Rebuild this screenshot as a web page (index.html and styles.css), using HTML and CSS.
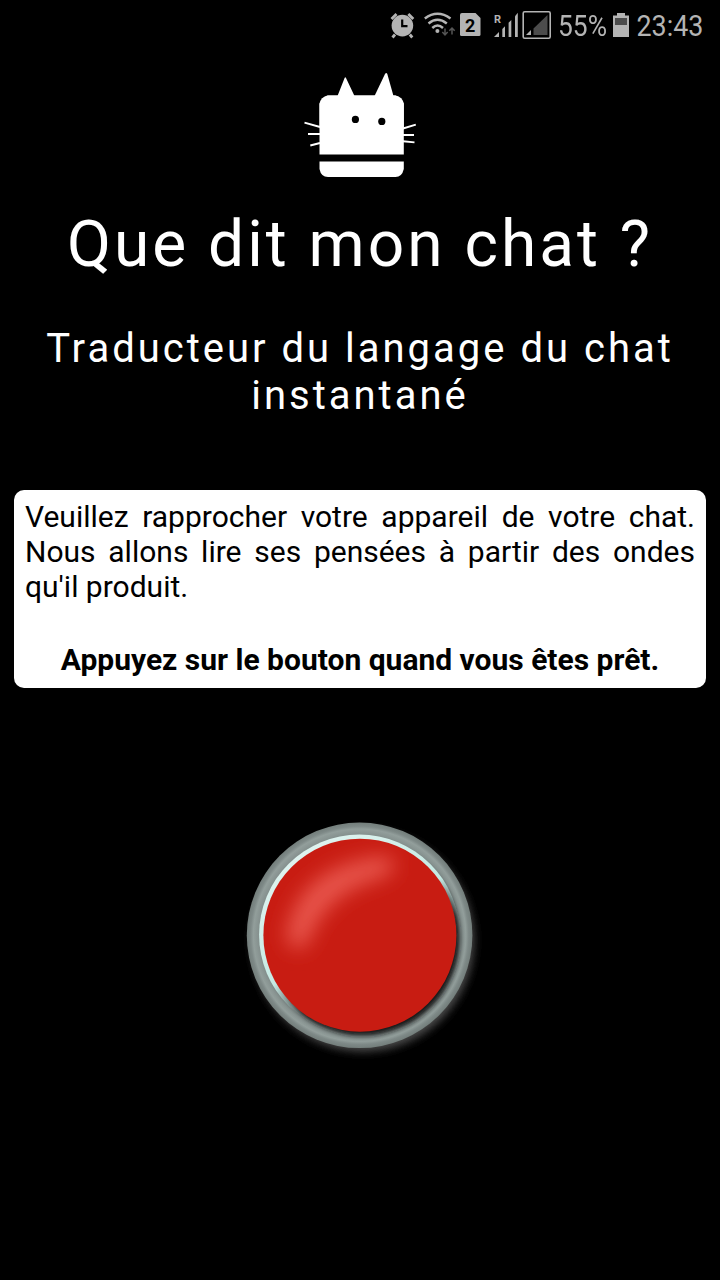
FILE: index.html
```
<!DOCTYPE html>
<html lang="fr">
  <head>
    <meta charset="utf-8">
    <title>Que dit mon chat ?</title>
    <link rel="stylesheet" href="styles.css">
  </head>
  <body>
    <div class="status-bar">
      <!-- alarm -->
      <svg width="34" height="50" viewBox="390 0 34 50">
        <circle cx="402.4" cy="25.6" r="10.8" fill="#b4b4b4"/>
        <path d="M391.5 19L396.5 14M413.3 19L408.3 14M395 34.5L392.5 37.5M409.8 34.5L412.3 37.5" stroke="#b4b4b4" stroke-width="2.8"/>
        <path d="M402.2 19.5V26.2H407.5" fill="none" stroke="#000" stroke-width="2.2"/>
      </svg>
      <!-- wifi -->
      <svg width="36" height="50" viewBox="424 0 36 50">
        <g fill="none" stroke="#b4b4b4" stroke-width="2.5">
          <path d="M424.8 18.5Q437.5 9 450.5 18.5"/>
          <path d="M428.5 23.5Q437.5 16 446.8 23.5"/>
          <path d="M432.3 28Q437.5 23 443 28"/>
        </g>
        <circle cx="437.4" cy="31" r="2" fill="#b4b4b4"/>
        <path d="M445 28.5V35M442.3 32L445 34.8L447.7 32M452 34.5V28M449.3 30.8L452 28L454.7 30.8" fill="none" stroke="#555" stroke-width="1.5"/>
      </svg>
      <!-- sim 2 -->
      <svg width="33" height="50" viewBox="460 0 33 50">
        <path d="M462 13H475.5L480.5 18V34.5Q480.5 36 479 36H461.5Q460 36 460 34.5V15Q460 13 462 13Z" fill="#b4b4b4"/>
        <text x="470.2" y="32.3" class="sim-number">2</text>
      </svg>
      <!-- signal, roaming -->
      <svg width="28" height="50" viewBox="493 0 28 50">
        <text x="494" y="23.2" class="roaming">R</text>
        <g fill="#b4b4b4">
          <path d="M494 37L499 32V37Z"/>
          <path d="M502.3 29L505 26.3V37H502.3Z"/>
          <path d="M508.6 22.7L511.3 20V37H508.6Z"/>
          <path d="M515 16.2L517.8 12.8V37H515Z"/>
        </g>
      </svg>
      <!-- second signal -->
      <svg width="37" height="50" viewBox="521 0 37 50">
        <rect x="523.2" y="11.8" width="27" height="26.4" rx="1.5" fill="none" stroke="#b4b4b4" stroke-width="1.6"/>
        <path d="M533.5 35V28.5L547.5 15V35Z" fill="#4c4c4c"/>
        <path d="M526 35L531 30V35Z" fill="#b4b4b4"/>
      </svg>
      <span class="status-text percent">55%</span>
      <!-- battery -->
      <svg width="24" height="50" viewBox="612 0 24 50">
        <path d="M613 15.5H617V13H625V15.5H629V37H613Z" fill="#b4b4b4"/>
        <rect x="615" y="18" width="12" height="7" fill="#4c4c4c"/>
      </svg>
      <span class="status-text clock">23:43</span>
    </div>

    <div class="header">
      <svg class="cat" width="120" height="120" viewBox="300 65 120 120">
        <g fill="#fff">
          <path d="M337.5 96L344.6 78Q345.3 76.5 346 78L354.5 96Z"/>
          <path d="M374.5 96L385 74Q386.3 72 387.3 74L393.5 96Z"/>
          <path d="M327 95.5H396L403.8 103V154.5H319.5V103Z"/>
          <rect x="319.5" y="95.5" width="84.3" height="40" rx="9"/>
          <path d="M319.5 161.5H403.8V169Q402 177 395.5 177H328Q321 177 319.5 169Z"/>
        </g>
        <circle cx="355.4" cy="119.4" r="3.6"/>
        <circle cx="381.8" cy="121.4" r="3.6"/>
        <path d="M304.5 122.7L320 127M308 134H320M310.3 145.5L320 143M403 128.5L415.8 124.7M403 135H414M403 141.3L414.5 142.4" stroke="#fff" stroke-width="1.9"/>
      </svg>
      <h1>Que dit mon chat ?</h1>
      <h2>Traducteur du langage du chat instantané</h2>
    </div>

    <div class="instructions">
      <p>Veuillez rapprocher votre appareil de votre chat. Nous allons lire ses pensées à partir des ondes qu'il produit.</p>
      <p class="ready">Appuyez sur le bouton quand vous êtes prêt.</p>
    </div>

    <button class="push-button" type="button" aria-label="Lire les pensées">
      <svg width="260" height="260" viewBox="230 805 260 260">
        <defs>
          <filter id="glow" x="-20%" y="-20%" width="140%" height="140%"><feGaussianBlur stdDeviation="4"/></filter>
          <filter id="soft" x="-20%" y="-20%" width="140%" height="140%"><feGaussianBlur stdDeviation="2.5"/></filter>
          <filter id="shine" x="-100%" y="-100%" width="300%" height="300%"><feGaussianBlur stdDeviation="10"/></filter>
          <radialGradient id="rim" gradientUnits="userSpaceOnUse" cx="359.6" cy="935.3" r="113">
            <stop offset=".87" stop-color="#7f8a88"/>
            <stop offset=".94" stop-color="#929e9b"/>
            <stop offset=".965" stop-color="#7e8987"/>
            <stop offset="1" stop-color="#727d7a"/>
          </radialGradient>
          <linearGradient id="edge" gradientUnits="userSpaceOnUse" x1="305" y1="851" x2="413" y2="1019">
            <stop offset="0" stop-color="#def3ef"/>
            <stop offset=".48" stop-color="#c5e9e3"/>
            <stop offset=".68" stop-color="#9ebbb8" stop-opacity="0"/>
          </linearGradient>
          <clipPath id="rim-clip"><circle cx="359.6" cy="935.3" r="112.5"/></clipPath>
          <clipPath id="red-clip"><circle cx="359.9" cy="935.2" r="96.5"/></clipPath>
        </defs>
        <circle cx="363" cy="940.5" r="111" fill="#4c4c4c" filter="url(#glow)"/>
        <circle cx="359.6" cy="935.3" r="112.8" fill="url(#rim)"/>
        <g clip-path="url(#rim-clip)">
          <circle cx="362.5" cy="938.5" r="97" fill="#151719" filter="url(#soft)"/>
        </g>
        <circle cx="359.4" cy="934.8" r="100.3" fill="url(#edge)"/>
        <circle cx="359.9" cy="935.2" r="96.5" fill="#c81c12"/>
        <g clip-path="url(#red-clip)">
          <path d="M286 938Q296 866 384 856Q404 862 386 876Q352 886 334 902Q316 918 308 942Q296 958 286 938Z" fill="#ea5a50" fill-opacity=".95" filter="url(#shine)"/>
        </g>
      </svg>
    </button>
  </body>
</html>
```
FILE: styles.css
```
* {
  box-sizing: border-box;
}

body {
  margin: 0;
  min-height: 1280px;
  display: flex;
  flex-direction: column;
  align-items: center;
  background-color: #000;
  color: #fff;
  font-family: Roboto, sans-serif;
}

svg {
  display: block;
  flex: none;
}

.status-bar {
  width: 100%;
  height: 50px;
  padding-right: 16px;
  display: flex;
  justify-content: flex-end;
}

.status-text {
  color: #b4b4b4;
  font-size: 30px;
  line-height: 51px;
  white-space: nowrap;
  transform-origin: left;
}

.percent {
  width: 54px;
  transform: scaleX(.88);
}

.clock {
  width: 68px;
  transform: translateX(.5px) scaleX(.895);
}

.sim-number {
  font-size: 18px;
  font-weight: bold;
  text-anchor: middle;
}

.roaming {
  font-size: 11px;
  font-weight: bold;
  fill: #b4b4b4;
}

.header {
  width: 100%;
  padding: 15px 14px 0;
  text-align: center;
}

.cat {
  margin: 0 auto;
}

h1 {
  margin: 22px 0 0;
  font-size: 64px;
  font-weight: normal;
  line-height: 75px;
  letter-spacing: 3px;
}

h2 {
  margin: 43px 0 0;
  font-size: 40px;
  font-weight: normal;
  line-height: 47px;
  letter-spacing: 3px;
}

.instructions {
  width: 692px;
  height: 198px;
  margin-top: 71px;
  padding: 9px 11px;
  background: #fff;
  color: #000;
  border-radius: 10px;
  font-size: 30px;
  line-height: 35px;
}

.instructions p {
  margin: 0;
  text-align: justify;
}

.instructions .ready {
  margin-top: 38px;
  font-weight: bold;
  text-align: center;
}

.push-button {
  margin-top: 117px;
  padding: 0;
  border: none;
  background: none;
}
```
